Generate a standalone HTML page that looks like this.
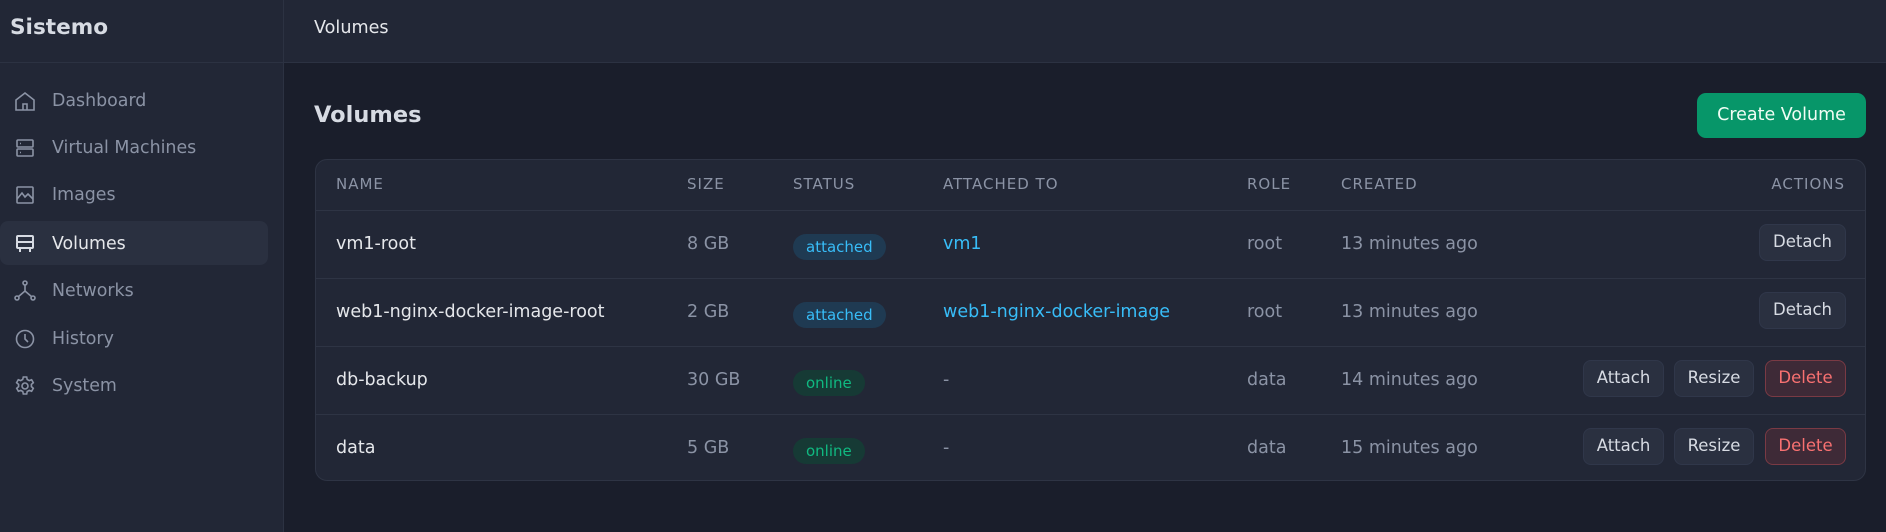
<!DOCTYPE html>
<html><head><meta charset="utf-8"><style>
*{box-sizing:border-box;margin:0;padding:0}
body{width:1886px;height:532px;background:#1a1e2b;font-family:"DejaVu Sans","Liberation Sans",sans-serif;color:#d1d5db;position:relative;overflow:hidden}
.side{position:absolute;left:0;top:0;width:284px;height:532px;background:#222736;border-right:1px solid #2c3242}
.logo{position:absolute;left:10px;top:15px;font-size:21.6px;font-weight:bold;color:#d7dbe3}
.hdr{position:absolute;left:284px;top:0;right:0;height:63px;background:#222736;border-bottom:1px solid #2c3242}
.sideline{position:absolute;left:0;top:62px;width:284px;height:1px;background:#2c3242}
.hdr span{position:absolute;left:30px;top:18px;font-size:17.6px;color:#e5e7eb}
.nav{position:absolute;left:0;width:268px;height:44px;font-size:17.4px;color:#8b93a5}
.nav svg{position:absolute;left:13px;top:11px}
.nav span{position:absolute;left:52px;top:11px;line-height:24px}
.nav.act{background:#2a3040;border-radius:8px;color:#e5e7eb}
h1{position:absolute;left:314px;top:102px;font-size:22.5px;font-weight:bold;color:#d7dbe3}
.create{position:absolute;left:1697px;top:93px;width:169px;height:45px;background:#079669;border-radius:9px;color:#f0fdf4;font-size:17.5px;text-align:center;line-height:45px}
.tbl{position:absolute;left:315px;top:159px;width:1551px;height:322px;background:#222736;border:1px solid #2e3444;border-radius:12px}
.th{position:absolute;top:0;height:50px;line-height:48px;font-size:15px;letter-spacing:1px;color:#8b93a5}
.row{position:absolute;left:0;right:0;height:68px;border-top:1px solid #2e3444}
.c{position:absolute;top:0;line-height:66px;font-size:17.5px;color:#8b93a5}
.n{color:#e5e7eb}
.lk{color:#38bdf8}
.badge{position:absolute;top:23px;height:26px;line-height:26px;padding:0 13px;border-radius:13px;font-size:15px}
.att{background:#1f3a52;color:#38bdf8}
.onl{background:#163a35;color:#10b981}
.btn{position:absolute;top:13px;height:37px;line-height:33px;text-align:center;border-radius:8px;background:#2a3040;border:1px solid #30374a;color:#d7dbe3;font-size:16.5px}
.del{background:#3e2a37;border-color:#7a3a44;color:#f87171}
</style></head><body>
<div class="side">
<div class="logo">Sistemo</div>
<div class="sideline"></div>
<div class="nav" style="top:78px"><svg width="24" height="24" viewBox="0 0 24 24" fill="none" stroke="#8b93a5" stroke-width="1.6"><path d="M3 11l9-7 9 7v10H3z"/><path d="M10 21v-6h4v6"/></svg><span>Dashboard</span></div>
<div class="nav" style="top:125px"><svg width="24" height="24" viewBox="0 0 24 24" fill="none" stroke="#8b93a5" stroke-width="1.6"><rect x="4" y="4" width="16" height="7" rx="1"/><rect x="4" y="13" width="16" height="7" rx="1"/><path d="M7 7.5h1M7 16.5h1"/></svg><span>Virtual Machines</span></div>
<div class="nav" style="top:172px"><svg width="24" height="24" viewBox="0 0 24 24" fill="none" stroke="#8b93a5" stroke-width="1.6"><rect x="4" y="4" width="16" height="16" rx="1"/><path d="M4 16l5-6 3 4 3-3 5 5"/></svg><span>Images</span></div>
<div class="nav act" style="top:221px"><svg width="24" height="24" viewBox="0 0 24 24" fill="none" stroke="#d7dbe3" stroke-width="2"><rect x="4" y="4" width="16" height="6" rx="1"/><rect x="4" y="10" width="16" height="6" rx="1"/><path d="M7 16v4M17 16v4"/></svg><span>Volumes</span></div>
<div class="nav" style="top:268px"><svg width="24" height="24" viewBox="0 0 24 24" fill="none" stroke="#8b93a5" stroke-width="1.6"><circle cx="12" cy="4" r="2"/><circle cx="4" cy="19" r="2"/><circle cx="20" cy="19" r="2"/><path d="M12 6v6l-7 6M12 12l7 6"/></svg><span>Networks</span></div>
<div class="nav" style="top:316px"><svg width="24" height="24" viewBox="0 0 24 24" fill="none" stroke="#8b93a5" stroke-width="1.6"><circle cx="12" cy="12" r="8.5"/><path d="M12 7v5l3 3"/></svg><span>History</span></div>
<div class="nav" style="top:363px"><svg width="24" height="24" viewBox="0 0 24 24" fill="none" stroke="#8b93a5" stroke-width="1.6"><circle cx="12" cy="12" r="3"/><path d="M10.3 3h3.4l.5 2.5 2 1.1 2.4-.9 1.7 3-1.9 1.7v2.2l1.9 1.7-1.7 3-2.4-.9-2 1.1-.5 2.5h-3.4l-.5-2.5-2-1.1-2.4.9-1.7-3 1.9-1.7v-2.2L3.6 8.7l1.7-3 2.4.9 2-1.1z"/></svg><span>System</span></div>
</div>
<div class="hdr"><span>Volumes</span></div>
<h1>Volumes</h1>
<div class="create">Create Volume</div>
<div class="tbl">
<div class="th" style="left:20px">NAME</div>
<div class="th" style="left:371px">SIZE</div>
<div class="th" style="left:477px">STATUS</div>
<div class="th" style="left:627px">ATTACHED TO</div>
<div class="th" style="left:931px">ROLE</div>
<div class="th" style="left:1025px">CREATED</div>
<div class="th" style="right:20px">ACTIONS</div>

<div class="row" style="top:50px">
<div class="c n" style="left:20px">vm1-root</div><div class="c" style="left:371px">8 GB</div>
<div class="badge att" style="left:477px">attached</div>
<div class="c lk" style="left:627px">vm1</div><div class="c" style="left:931px">root</div><div class="c" style="left:1025px">13 minutes ago</div>
<div class="btn" style="left:1443px;width:87px">Detach</div></div>

<div class="row" style="top:118px">
<div class="c n" style="left:20px">web1-nginx-docker-image-root</div><div class="c" style="left:371px">2 GB</div>
<div class="badge att" style="left:477px">attached</div>
<div class="c lk" style="left:627px">web1-nginx-docker-image</div><div class="c" style="left:931px">root</div><div class="c" style="left:1025px">13 minutes ago</div>
<div class="btn" style="left:1443px;width:87px">Detach</div></div>

<div class="row" style="top:186px">
<div class="c n" style="left:20px">db-backup</div><div class="c" style="left:371px">30 GB</div>
<div class="badge onl" style="left:477px">online</div>
<div class="c" style="left:627px">-</div><div class="c" style="left:931px">data</div><div class="c" style="left:1025px">14 minutes ago</div>
<div class="btn" style="left:1267px;width:81px">Attach</div><div class="btn" style="left:1358px;width:80px">Resize</div><div class="btn del" style="left:1449px;width:81px">Delete</div></div>

<div class="row" style="top:254px">
<div class="c n" style="left:20px">data</div><div class="c" style="left:371px">5 GB</div>
<div class="badge onl" style="left:477px">online</div>
<div class="c" style="left:627px">-</div><div class="c" style="left:931px">data</div><div class="c" style="left:1025px">15 minutes ago</div>
<div class="btn" style="left:1267px;width:81px">Attach</div><div class="btn" style="left:1358px;width:80px">Resize</div><div class="btn del" style="left:1449px;width:81px">Delete</div></div>
</div>
</body></html>
